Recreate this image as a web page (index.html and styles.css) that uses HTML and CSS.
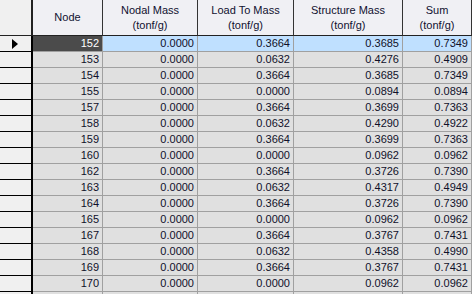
FILE: index.html
```html
<!DOCTYPE html>
<html>
<head>
<meta charset="utf-8">
<link rel="stylesheet" href="styles.css">
</head>
<body>
<div class="grid">
  <div class="row head">
    <div class="rh"></div>
    <div class="hc">Node</div>
    <div class="hc">Nodal Mass<br>(tonf/g)</div>
    <div class="hc">Load To Mass<br>(tonf/g)</div>
    <div class="hc">Structure Mass<br>(tonf/g)</div>
    <div class="hc">Sum<br>(tonf/g)</div>
  </div>
  <div class="row sel">
    <div class="rh"><span class="tri"></span></div>
    <div class="c node">152</div><div class="c">0.0000</div><div class="c">0.3664</div><div class="c">0.3685</div><div class="c">0.7349</div>
  </div>
  <div class="row"><div class="rh"></div><div class="c">153</div><div class="c">0.0000</div><div class="c">0.0632</div><div class="c">0.4276</div><div class="c">0.4909</div></div>
  <div class="row"><div class="rh"></div><div class="c">154</div><div class="c">0.0000</div><div class="c">0.3664</div><div class="c">0.3685</div><div class="c">0.7349</div></div>
  <div class="row"><div class="rh"></div><div class="c">155</div><div class="c">0.0000</div><div class="c">0.0000</div><div class="c">0.0894</div><div class="c">0.0894</div></div>
  <div class="row"><div class="rh"></div><div class="c">157</div><div class="c">0.0000</div><div class="c">0.3664</div><div class="c">0.3699</div><div class="c">0.7363</div></div>
  <div class="row"><div class="rh"></div><div class="c">158</div><div class="c">0.0000</div><div class="c">0.0632</div><div class="c">0.4290</div><div class="c">0.4922</div></div>
  <div class="row"><div class="rh"></div><div class="c">159</div><div class="c">0.0000</div><div class="c">0.3664</div><div class="c">0.3699</div><div class="c">0.7363</div></div>
  <div class="row"><div class="rh"></div><div class="c">160</div><div class="c">0.0000</div><div class="c">0.0000</div><div class="c">0.0962</div><div class="c">0.0962</div></div>
  <div class="row"><div class="rh"></div><div class="c">162</div><div class="c">0.0000</div><div class="c">0.3664</div><div class="c">0.3726</div><div class="c">0.7390</div></div>
  <div class="row"><div class="rh"></div><div class="c">163</div><div class="c">0.0000</div><div class="c">0.0632</div><div class="c">0.4317</div><div class="c">0.4949</div></div>
  <div class="row"><div class="rh"></div><div class="c">164</div><div class="c">0.0000</div><div class="c">0.3664</div><div class="c">0.3726</div><div class="c">0.7390</div></div>
  <div class="row"><div class="rh"></div><div class="c">165</div><div class="c">0.0000</div><div class="c">0.0000</div><div class="c">0.0962</div><div class="c">0.0962</div></div>
  <div class="row"><div class="rh"></div><div class="c">167</div><div class="c">0.0000</div><div class="c">0.3664</div><div class="c">0.3767</div><div class="c">0.7431</div></div>
  <div class="row"><div class="rh"></div><div class="c">168</div><div class="c">0.0000</div><div class="c">0.0632</div><div class="c">0.4358</div><div class="c">0.4990</div></div>
  <div class="row"><div class="rh"></div><div class="c">169</div><div class="c">0.0000</div><div class="c">0.3664</div><div class="c">0.3767</div><div class="c">0.7431</div></div>
  <div class="row"><div class="rh"></div><div class="c">170</div><div class="c">0.0000</div><div class="c">0.0000</div><div class="c">0.0962</div><div class="c">0.0962</div></div>
  <div class="row"><div class="rh"></div><div class="c"></div><div class="c"></div><div class="c"></div><div class="c"></div><div class="c"></div></div>
</div>
</body>
</html>
```
FILE: styles.css
```css
html, body {
  margin: 0;
  padding: 0;
  background: #ffffff;
  overflow: hidden;
}
.grid {
  width: 472px;
  font-family: "Liberation Sans", Arial, sans-serif;
  font-size: 11px;
  color: #10102a;
}
.row {
  display: grid;
  grid-template-columns: 33px 70px 95px 96px 109px 69px;
  height: 16px;
}
.row.head {
  height: 36px;
}
.rh {
  background: #f0f0f0;
  border-right: 2px solid #000;
  border-bottom: 1px solid #000;
  box-sizing: border-box;
  display: flex;
  align-items: center;
  padding-left: 12px;
}
.head .rh {
  border-right: 2px solid #222;
  border-bottom: 1px solid #222;
}
.hc {
  background: #f0f0f4;
  border-right: 1px solid #333;
  border-bottom: 1px solid #222;
  box-sizing: border-box;
  display: flex;
  align-items: center;
  justify-content: center;
  text-align: center;
  line-height: 15px;
  color: #101030;
}
.c {
  background: #e0e0e0;
  border-right: 1px solid #a0a0a0;
  border-bottom: 1px solid #a0a0a0;
  box-sizing: border-box;
  text-align: right;
  padding-right: 3px;
  line-height: 15px;
}
.sel .c {
  background: #bfe0ff;
}
.sel .c.node {
  background: #4b4b4b;
  color: #ffffff;
}
.tri {
  width: 0;
  height: 0;
  border-top: 5px solid transparent;
  border-bottom: 5px solid transparent;
  border-left: 6px solid #000;
}
```
